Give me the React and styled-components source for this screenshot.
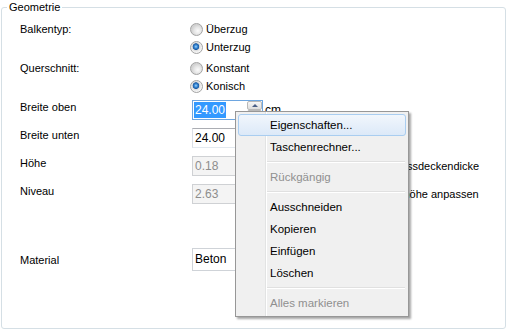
import React from "react";
import styled, { createGlobalStyle } from "styled-components";

const GlobalStyle = createGlobalStyle`
  html, body {
    margin: 0;
    padding: 0;
    background: #fff;
  }
  body {
    font-family: "Liberation Sans", Arial, sans-serif;
    font-size: 11px;
    color: #000;
  }
`;

const Page = styled.div`
  position: relative;
  width: 507px;
  height: 332px;
  overflow: hidden;
  background: #fff;
`;

const GroupBox = styled.fieldset`
  box-sizing: border-box;
  margin: 0 1px;
  height: 329px;
  min-width: 0;
  padding: 6px 0 0 0;
  border: 1px solid #d5dfe5;
  border-radius: 3px;
`;

const Legend = styled.legend`
  margin-left: 5px;
  padding: 0 2px;
  line-height: 14px;
`;

const Form = styled.div`
  padding-left: 18px;
`;

const Row = styled.div`
  display: grid;
  grid-template-columns: 172px 1fr;
  align-items: ${p => p.$align || "start"};
  margin-top: ${p => p.$gap || 0}px;
`;

const RowLabel = styled.div`
  line-height: 18px;
`;

const FieldLabel = styled.div`
  padding-top: 1px;
  line-height: 13px;
`;

const RadioList = styled.div`
  display: flex;
  flex-direction: column;
  margin-left: -2px;
`;

const RadioItem = styled.label`
  display: flex;
  align-items: center;
  gap: 3px;
  height: 18px;
`;

const RadioMark = styled.span`
  box-sizing: border-box;
  width: 13px;
  height: 13px;
  border-radius: 50%;
  border: 1px solid #a3a3a3;
  background: ${p =>
    p.$checked
      ? "radial-gradient(circle at 45% 42%, #9fd3fa 0, #3a8ad6 1.6px, #1a5aa3 3px, #d9d9d9 3.6px, #e9e9e9 4.6px, #f6f6f6 6px)"
      : "radial-gradient(circle at 62% 62%, #fbfbfb 0, #e6e6e6 3.5px, #d2d2d2 6px)"};
`;

const Controls = styled.div`
  display: flex;
  align-items: center;
`;

const NumBox = styled.div`
  box-sizing: border-box;
  width: 71px;
  height: 20px;
  display: flex;
  align-items: center;
  padding-left: 1px;
  border: 1px solid;
  border-color: ${p =>
    p.$focused
      ? "#6ea6e0"
      : p.$disabled
      ? "#cfd1d4"
      : "#abadb3 #e2e3ea #e3e9ef #dbdfe6"};
  background: ${p => (p.$disabled ? "#f4f4f4" : "#fff")};
  color: ${p => (p.$disabled ? "#8d8d8d" : "#000")};
  font-size: 12px;
`;

const Value = styled.span`
  padding: 1px 1px;
  line-height: 14px;
  background: ${p => (p.$selected ? "#3399ff" : "transparent")};
  color: ${p => (p.$selected ? "#fff" : "inherit")};
`;

const Spin = styled.div`
  margin-left: auto;
  width: 15px;
  height: 18px;
  display: flex;
  flex-direction: column;
`;

const SpinButton = styled.div`
  box-sizing: border-box;
  flex: 1;
  display: flex;
  align-items: center;
  justify-content: center;
  border: 1px solid #b9b9b9;
  border-radius: 2px;
  background: linear-gradient(#f6f6f6, #dedede);
  &::before {
    content: "";
    border-left: 3px solid transparent;
    border-right: 3px solid transparent;
    border-${p => (p.$down ? "top" : "bottom")}: 3px solid #4a5f86;
  }
`;

const Unit = styled.span`
  margin-left: 2px;
  font-size: 12px;
`;

const SideText = styled.span`
  margin-left: ${p => p.$offset}px;
  white-space: nowrap;
`;

const Combo = styled.div`
  box-sizing: border-box;
  width: 130px;
  height: 23px;
  padding: 3px 2px;
  border: 1px solid #cfd3d8;
  font-size: 12px;
  line-height: 14px;
`;

const Menu = styled.div`
  position: absolute;
  left: 235px;
  top: 111px;
  box-sizing: border-box;
  width: 174px;
  padding: 2px;
  border: 1px solid #979797;
  background: linear-gradient(
      to right,
      transparent 29px,
      #e2e3e3 29px,
      #e2e3e3 30px,
      #fff 30px,
      #fff 31px,
      transparent 31px
    ),
    #f0f0f0;
  box-shadow: 2px 2px 2px rgba(0, 0, 0, 0.35);
`;

const MenuItem = styled.div`
  box-sizing: border-box;
  height: 22px;
  line-height: 20px;
  padding-left: 31px;
  border: 1px solid ${p => (p.$hot ? "#a9cdf0" : "transparent")};
  border-radius: 3px;
  background: ${p =>
    p.$hot ? "linear-gradient(#f1f6fc, #dce9f8)" : "transparent"};
  color: ${p => (p.$disabled ? "#8f8f8f" : "#000")};
  font-size: 11.5px;
`;

const MenuSeparator = styled.div`
  height: 8px;
  margin-left: 29px;
  margin-right: 1px;
  display: flex;
  flex-direction: column;
  justify-content: center;
  &::before {
    content: "";
    height: 1px;
    background: #e0e0e0;
    border-bottom: 1px solid #fff;
  }
`;

const NumField = ({ value, focused, disabled }) => (
  <NumBox $focused={focused} $disabled={disabled}>
    <Value $selected={focused}>{value}</Value>
    <Spin>
      <SpinButton />
      <SpinButton $down />
    </Spin>
  </NumBox>
);

const RadioGroup = ({ options }) => (
  <RadioList>
    {options.map(o => (
      <RadioItem key={o.label}>
        <RadioMark $checked={o.checked} />
        {o.label}
      </RadioItem>
    ))}
  </RadioList>
);

const menu = [
  { label: "Eigenschaften...", hot: true },
  { label: "Taschenrechner..." },
  "sep",
  { label: "Rückgängig", disabled: true },
  "sep",
  { label: "Ausschneiden" },
  { label: "Kopieren" },
  { label: "Einfügen" },
  { label: "Löschen" },
  "sep",
  { label: "Alles markieren", disabled: true },
];

export default function App() {
  return (
    <Page>
      <GlobalStyle />
      <GroupBox>
        <Legend>Geometrie</Legend>
        <Form>
          <Row>
            <RowLabel>Balkentyp:</RowLabel>
            <RadioGroup
              options={[
                { label: "Überzug" },
                { label: "Unterzug", checked: true },
              ]}
            />
          </Row>
          <Row $gap={3}>
            <RowLabel>Querschnitt:</RowLabel>
            <RadioGroup
              options={[
                { label: "Konstant" },
                { label: "Konisch", checked: true },
              ]}
            />
          </Row>
          <Row $gap={5}>
            <FieldLabel>Breite oben</FieldLabel>
            <Controls>
              <NumField value="24.00" focused />
              <Unit>cm</Unit>
            </Controls>
          </Row>
          <Row $gap={8}>
            <FieldLabel>Breite unten</FieldLabel>
            <Controls>
              <NumField value="24.00" />
            </Controls>
          </Row>
          <Row $gap={8}>
            <FieldLabel>Höhe</FieldLabel>
            <Controls>
              <NumField value="0.18" disabled />
              <SideText $offset={106}>Geschossdeckendicke</SideText>
            </Controls>
          </Row>
          <Row $gap={8}>
            <FieldLabel>Niveau</FieldLabel>
            <Controls>
              <NumField value="2.63" disabled />
              <SideText $offset={75}>An Geschosshöhe anpassen</SideText>
            </Controls>
          </Row>
          <Row $gap={44} $align="center">
            <FieldLabel>Material</FieldLabel>
            <Controls>
              <Combo>Beton</Combo>
            </Controls>
          </Row>
        </Form>
      </GroupBox>

      <Menu>
        {menu.map((m, i) =>
          m === "sep" ? (
            <MenuSeparator key={i} />
          ) : (
            <MenuItem key={i} $hot={m.hot} $disabled={m.disabled}>
              {m.label}
            </MenuItem>
          )
        )}
      </Menu>
    </Page>
  );
}
